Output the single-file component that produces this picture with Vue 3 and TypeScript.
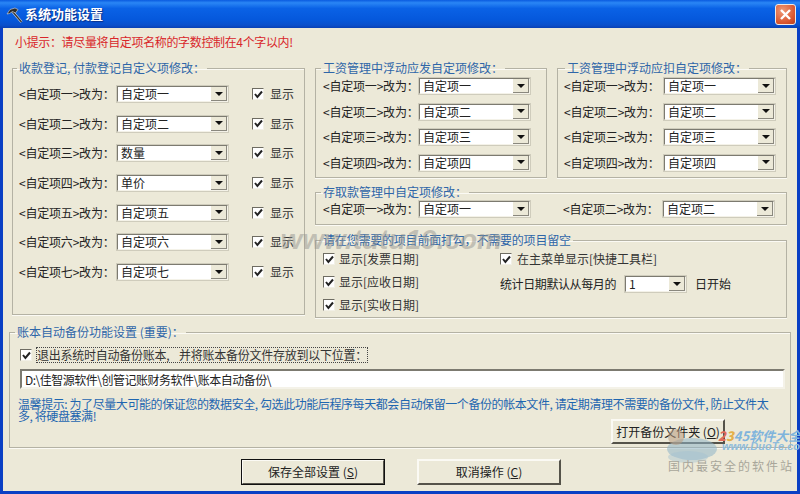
<script setup lang="ts">
const left = [
  { from: '<自定项一>改为：', value: '自定项一' },
  { from: '<自定项二>改为：', value: '自定项二' },
  { from: '<自定项三>改为：', value: '数量' },
  { from: '<自定项四>改为：', value: '单价' },
  { from: '<自定项五>改为：', value: '自定项五' },
  { from: '<自定项六>改为：', value: '自定项六' },
  { from: '<自定项七>改为：', value: '自定项七' }
]
const four = [
  { from: '<自定项一>改为：', value: '自定项一' },
  { from: '<自定项二>改为：', value: '自定项二' },
  { from: '<自定项三>改为：', value: '自定项三' },
  { from: '<自定项四>改为：', value: '自定项四' }
]
const wage = [
  { title: '工资管理中浮动应发自定项修改：', cls: 'g-add' },
  { title: '工资管理中浮动应扣自定项修改：', cls: 'g-sub' }
]
</script>

<template>
  <div class="window">
    <div class="titlebar">
      <svg class="app-icon" width="18" height="18" viewBox="0 0 18 18">
        <path d="M6.5 6.5 L15.5 17" stroke="#e8e8e8" stroke-width="2.6" />
        <path d="M6.5 6.5 L15.5 17" stroke="#333" stroke-width="1.4" />
        <path d="M1 9 L4 4.5 L9 3 L12 4.5 L9.5 8 L6.5 6.5 L3.5 8.5 Z" fill="#2c2c2c" stroke="#d8d8d8" stroke-width=".6" />
      </svg>
      <span class="title">系统功能设置</span>
      <button class="close">
        <svg width="13" height="13" viewBox="0 0 13 13">
          <path d="M2 2 L11 11 M11 2 L2 11" stroke="#fff" stroke-width="2.4" />
        </svg>
      </button>
    </div>

    <div class="client">
      <div class="hint">小提示：请尽量将自定项名称的字数控制在4个字以内!</div>

      <div class="top">
        <fieldset class="group g-left">
          <legend>收款登记, 付款登记自定义项修改：</legend>
          <div v-for="row in left" :key="row.from" class="row-left">
            <span class="lbl">{{ row.from }}</span>
            <div class="combo combo-r">
              <span class="val">{{ row.value }}</span>
              <span class="arrow"></span>
            </div>
            <label class="chk chk-show"><span class="box"><svg width="9" height="9" viewBox="0 0 9 9"><path d="M1 4 L3.4 7 L8 1.5" fill="none" stroke="#222" stroke-width="2" /></svg></span>显示</label>
          </div>
        </fieldset>

        <div class="right">
          <div class="wages">
            <fieldset v-for="g in wage" :key="g.title" class="group" :class="g.cls">
              <legend>{{ g.title }}</legend>
              <div v-for="row in four" :key="row.from" class="row-right">
                <span class="lbl">{{ row.from }}</span>
                <div class="combo combo-r">
                  <span class="val">{{ row.value }}</span>
                  <span class="arrow"></span>
                </div>
              </div>
            </fieldset>
          </div>

          <fieldset class="group g-deposit">
            <legend>存取款管理中自定项修改：</legend>
            <div class="deposit-row">
              <div class="row-right">
                <span class="lbl">&lt;自定项一&gt;改为：</span>
                <div class="combo combo-r"><span class="val">自定项一</span><span class="arrow"></span></div>
              </div>
              <div class="row-right">
                <span class="lbl lbl-wide">&lt;自定项二&gt;改为：</span>
                <div class="combo combo-r"><span class="val">自定项二</span><span class="arrow"></span></div>
              </div>
            </div>
          </fieldset>

          <fieldset class="group g-options">
            <legend>请在您需要的项目前面打勾，不需要的项目留空</legend>
            <div class="options">
              <div class="opt-col">
                <label class="chk"><span class="box"><svg width="9" height="9" viewBox="0 0 9 9"><path d="M1 4 L3.4 7 L8 1.5" fill="none" stroke="#222" stroke-width="2" /></svg></span>显示[发票日期]</label>
                <label class="chk"><span class="box"><svg width="9" height="9" viewBox="0 0 9 9"><path d="M1 4 L3.4 7 L8 1.5" fill="none" stroke="#222" stroke-width="2" /></svg></span>显示[应收日期]</label>
                <label class="chk"><span class="box"><svg width="9" height="9" viewBox="0 0 9 9"><path d="M1 4 L3.4 7 L8 1.5" fill="none" stroke="#222" stroke-width="2" /></svg></span>显示[实收日期]</label>
              </div>
              <div class="opt-col opt-col2">
                <label class="chk"><span class="box"><svg width="9" height="9" viewBox="0 0 9 9"><path d="M1 4 L3.4 7 L8 1.5" fill="none" stroke="#222" stroke-width="2" /></svg></span>在主菜单显示[快捷工具栏]</label>
                <div class="day-row">
                  <span class="day-lbl">统计日期默认从每月的</span>
                  <div class="combo combo-day"><span class="val">1</span><span class="arrow"></span></div>
                  <span>日开始</span>
                </div>
              </div>
            </div>
          </fieldset>
        </div>
      </div>

      <fieldset class="group g-backup">
        <legend>账本自动备份功能设置 (重要)：</legend>
        <label class="chk backup-chk"><span class="box"><svg width="9" height="9" viewBox="0 0 9 9"><path d="M1 4 L3.4 7 L8 1.5" fill="none" stroke="#222" stroke-width="2" /></svg></span><span class="focus">退出系统时自动备份账本,&nbsp;&nbsp;&nbsp;&nbsp;并将账本备份文件存放到以下位置：</span></label>
        <div class="path">D:\佳智源软件\创管记账财务软件\账本自动备份\</div>
        <div class="notice-area">
          <p class="notice">温馨提示: 为了尽量大可能的保证您的数据安全, 勾选此功能后程序每天都会自动保留一个备份的帐本文件, 请定期清理不需要的备份文件, 防止文件太多, 将硬盘塞满!</p>
          <button class="btn btn-open">打开备份文件夹 (<u>O</u>)</button>
        </div>
      </fieldset>

      <div class="actions">
        <button class="btn btn-main btn-default">保存全部设置 (<u>S</u>)</button>
        <button class="btn btn-main">取消操作 (<u>C</u>)</button>
      </div>
    </div>

    <div class="wm-center">www.tutu19.com</div>
    <div class="wm-corner">
      <svg class="wm-logo" width="62" height="44" viewBox="0 0 62 44">
        <ellipse cx="30" cy="24" rx="25" ry="11" fill="#8fb4c8" opacity=".55" />
        <ellipse cx="26" cy="32" rx="20" ry="6" fill="#a5c0d0" opacity=".45" />
        <circle cx="14" cy="12" r="8" fill="#b89a80" opacity=".55" />
      </svg>
      <span class="wm-brand"><b class="wm-red">2</b><b class="wm-yellow">3</b>45软件大全</span>
      <span class="wm-url">www.DuoTe.com</span>
      <span class="wm-slogan">国内最安全的软件站</span>
    </div>
  </div>
</template>

<style>
html, body { margin: 0; padding: 0; }
</style>

<style scoped>
.window {
  position: relative;
  width: 800px;
  height: 494px;
  overflow: hidden;
  display: flex;
  flex-direction: column;
  background: #0a3fc4;
  font: 12px/14px "Noto Sans CJK SC", "Liberation Sans", sans-serif;
  color: #222;
}

.titlebar {
  height: 28px;
  flex: none;
  display: flex;
  align-items: center;
  padding: 0 4px 0 6px;
  gap: 1px;
  background: linear-gradient(#0a5be0 0, #2a86f5 10%, #0a62e6 30%, #0558dc 70%, #0a4fcb 90%, #0940b5 100%);
}
.title {
  color: #fff;
  font-size: 13px;
  font-weight: 700;
  text-shadow: 1px 1px 1px #0b2f86;
}
.close {
  margin-left: auto;
  width: 21px;
  height: 21px;
  padding: 0;
  display: flex;
  align-items: center;
  justify-content: center;
  border: 1px solid #f0e8e4;
  border-radius: 3px;
  background: radial-gradient(circle at 35% 30%, #ef9a78, #d8532c 70%, #b8401e);
}

.client {
  flex: 1;
  min-height: 0;
  margin: 0 3px 3px;
  padding: 0 6px;
  background: #ece9d8;
  display: flex;
  flex-direction: column;
}

.hint {
  height: 33px;
  padding: 7px 0 0 6px;
  box-sizing: border-box;
  color: #d9262a;
  letter-spacing: -.35px;
}

.top {
  display: flex;
  gap: 10px;
  margin: 0 3px;
}

.group {
  margin: 0;
  min-width: 0;
  box-sizing: border-box;
  border: 1px solid #b4b2a4;
  box-shadow: 0 1px 0 #fbfaf4, inset 0 1px 0 #fbfaf4;
}
.group legend {
  margin-left: -2px;
  padding: 0 2px;
  color: #2f66a8;
  line-height: 14px;
  height: 14px;
}

.g-left {
  width: 293px;
  height: 254px;
  padding: 9px 0 0 6px;
  display: flex;
  flex-direction: column;
  gap: 9.7px;
}
.row-left {
  display: flex;
  align-items: center;
  height: 20px;
}
.row-left .lbl { width: 97px; }
.lbl { white-space: nowrap; flex: none; letter-spacing: -.2px; }

.combo {
  box-sizing: border-box;
  height: 18px;
  display: flex;
  align-items: center;
  padding-left: 3px;
  background: #fff;
  border: 2px solid;
  border-color: #7c7a70 #f4f2e8 #f4f2e8 #7c7a70;
  outline: 1px solid #cfccbc;
  outline-offset: -1px;
}
.combo-r { width: 113px; }
.combo-day { width: 63px; }
.arrow {
  margin-left: auto;
  width: 16px;
  height: 14px;
  flex: none;
  display: flex;
  align-items: center;
  justify-content: center;
  background: #ece9d8;
  border-right: 1px solid #8a887e;
  border-bottom: 1px solid #8a887e;
  box-sizing: border-box;
}
.arrow::after {
  content: "";
  border-left: 4px solid transparent;
  border-right: 4px solid transparent;
  border-top: 4px solid #111;
}

.chk {
  display: flex;
  align-items: center;
  gap: 6px;
  color: #333;
  white-space: nowrap;
}
.box {
  box-sizing: border-box;
  width: 12px;
  height: 12px;
  flex: none;
  display: flex;
  align-items: center;
  justify-content: center;
  background: #fff;
  border: 1px solid;
  border-color: #6e6c62 #f2f0e6 #f2f0e6 #6e6c62;
}
.chk-show { margin-left: 23px; }

.right {
  width: 472px;
  display: flex;
  flex-direction: column;
  gap: 7px;
}
.wages {
  display: flex;
  justify-content: space-between;
}
.g-add { width: 232px; }
.g-sub { width: 230px; padding-left: 6px !important; }
.g-sub legend { margin-left: 1px; }
.g-add, .g-sub {
  height: 117px;
  padding: 1px 0 0 7px;
  display: flex;
  flex-direction: column;
  gap: 5.6px;
}
.row-right {
  display: flex;
  align-items: center;
  height: 20px;
}
.row-right .lbl { width: 95px; }
.g-sub .row-right .lbl, .row-right .lbl-wide { width: 99px; }

.g-deposit {
  height: 40px;
  padding: 0 0 0 7px;
}
.deposit-row { display: flex; gap: 32px; }

.g-options {
  height: 85px;
  margin-top: 1px;
  padding: 2px 0 0 7px;
}
.g-options legend { letter-spacing: -.2px; }
.options { display: flex; }
.opt-col {
  width: 177px;
  display: flex;
  flex-direction: column;
  gap: 3px;
}
.opt-col .chk { height: 20px; gap: 4px; }
.opt-col2 { width: auto; gap: 5px; }
.opt-col2 .chk { gap: 5px; }
.day-row {
  display: flex;
  align-items: center;
  gap: 8px;
  height: 20px;
}
.day-lbl { letter-spacing: -.4px; }

.g-backup {
  margin-top: 7px;
  height: 123px;
  padding: 8px 4px 0 10px;
}
.g-backup legend { margin-left: -5px; }
.backup-chk { height: 16px; gap: 5px; }
.focus { outline: 1px dotted #444; letter-spacing: -.25px; }
.path {
  box-sizing: border-box;
  width: 765px;
  height: 20px;
  margin-top: 6px;
  padding: 2px 3px;
  background: #fff;
  border: 2px solid;
  border-color: #7c7a70 #f4f2e8 #f4f2e8 #7c7a70;
  font-size: 12px;
  line-height: 14px;
  letter-spacing: -.5px;
}
.notice-area {
  display: grid;
  margin: 9px 0 0 -2px;
}
.notice, .btn-open { grid-area: 1 / 1; }
.notice {
  margin: 0;
  width: 760px;
  height: 42px;
  color: #1e66b0;
  line-height: 12px;
  letter-spacing: -.42px;
}

.btn {
  font: inherit;
  color: #222;
  padding: 0;
  background: #ece9d8;
  border: 2px solid;
  border-color: #fbfaf4 #55534a #55534a #fbfaf4;
  box-sizing: border-box;
}
.btn-open {
  justify-self: start;
  align-self: start;
  width: 114px;
  height: 25px;
  margin: 21px 0 0 593px;
}

.actions {
  display: flex;
  justify-content: center;
  gap: 32px;
  margin-top: 11px;
  padding-left: 2px;
}
.btn-main { width: 144px; height: 26px; }
.btn-default { outline: 1px solid #111; outline-offset: -1px; }

.wm-center {
  position: absolute;
  right: 298px;
  top: 224px;
  color: rgba(150, 150, 145, .5);
  font: italic 700 28px "Liberation Sans", sans-serif;
  white-space: nowrap;
  pointer-events: none;
}
.wm-corner {
  position: absolute;
  left: 662px;
  top: 425px;
  width: 138px;
  height: 60px;
  pointer-events: none;
}
.wm-logo { position: absolute; left: 0; top: 0; }
.wm-brand {
  position: absolute;
  left: 56px;
  top: 1px;
  font: italic 700 13px "Noto Sans CJK SC", sans-serif;
  color: #7fb4dc;
  white-space: nowrap;
}
.wm-red { color: #e06a5a; }
.wm-yellow { color: #e4b04a; }
.wm-url {
  position: absolute;
  left: 60px;
  top: 15px;
  font: italic 700 11px "Liberation Sans", sans-serif;
  color: #8fbcdc;
}
.wm-slogan {
  position: absolute;
  left: 6px;
  top: 34px;
  font-size: 12px;
  letter-spacing: 2px;
  color: #a8a69a;
  white-space: nowrap;
}
</style>
